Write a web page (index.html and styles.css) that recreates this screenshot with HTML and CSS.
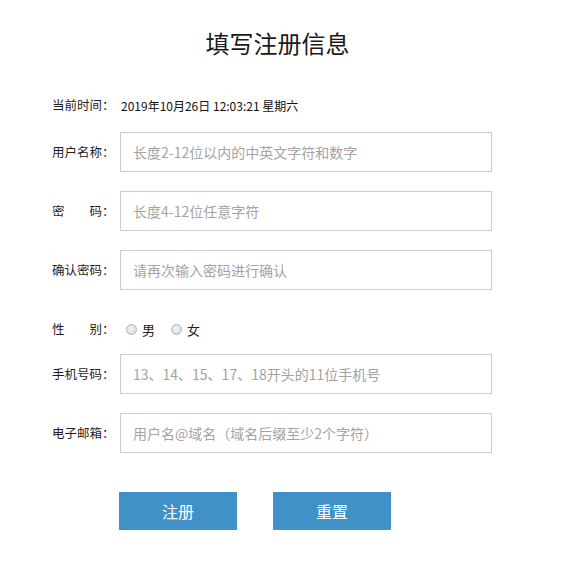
FILE: index.html
```html
<!DOCTYPE html>
<html lang="zh">
<head>
<meta charset="utf-8">
<title>填写注册信息</title>
<link rel="stylesheet" href="styles.css">
</head>
<body>
<div class="page">
  <h1 class="title">填写注册信息</h1>
  <form class="form">
    <div class="row row-time">
      <span class="label">当前时间：</span>
      <span class="time">2019年10月26日 12:03:21 星期六</span>
    </div>
    <div class="row">
      <span class="label">用户名称：</span>
      <input class="field" type="text" placeholder="长度2-12位以内的中英文字符和数字">
    </div>
    <div class="row">
      <span class="label">密　　码：</span>
      <input class="field" type="password" placeholder="长度4-12位任意字符">
    </div>
    <div class="row">
      <span class="label">确认密码：</span>
      <input class="field" type="password" placeholder="请再次输入密码进行确认">
    </div>
    <div class="row row-gender">
      <span class="label">性　　别：</span>
      <label class="radio"><input type="radio" name="sex"><span>男</span></label>
      <label class="radio"><input type="radio" name="sex"><span>女</span></label>
    </div>
    <div class="row">
      <span class="label">手机号码：</span>
      <input class="field" type="text" placeholder="13、14、15、17、18开头的11位手机号">
    </div>
    <div class="row row-last">
      <span class="label">电子邮箱：</span>
      <input class="field" type="text" placeholder="用户名@域名（域名后缀至少2个字符）">
    </div>
    <div class="buttons">
      <button type="button" class="btn">注册</button>
      <button type="button" class="btn">重置</button>
    </div>
  </form>
</div>
</body>
</html>
```
FILE: styles.css
```css
* { box-sizing: border-box; }
html, body { margin: 0; padding: 0; background: #fff; }
body {
  font-family: "Noto Sans CJK SC", "Noto Sans", "Liberation Sans", sans-serif;
  color: #222;
}
.page { width: 567px; }
.title {
  margin: 0;
  padding-top: 27px;
  padding-right: 12px;
  height: 59px;
  font-size: 24px;
  line-height: 32px;
  font-weight: normal;
  text-align: center;
  color: #1a1a1a;
}
.form {
  padding-left: 52px;
  padding-top: 26px;
}
.row {
  display: flex;
  align-items: center;
  height: 40px;
  margin-bottom: 19px;
}
.row-time { margin-bottom: 7px; }
.row-gender { margin-bottom: 5px; }
.row-last { margin-bottom: 0; }
.label {
  width: 68px;
  flex: none;
  font-size: 12.5px;
  color: #1e1e1e;
  line-height: 16px;
}
.time {
  font-size: 12px;
  color: #111;
  padding-left: 1px;
}
.field {
  width: 372px;
  height: 40px;
  border: 1px solid #ccc;
  padding: 0 12px;
  font-family: inherit;
  font-size: 14px;
  color: #333;
  outline: none;
  background: #fff;
}
.field::placeholder { color: #a3a3a3; }
.radio {
  display: flex;
  align-items: center;
  font-size: 13px;
  color: #222;
  margin-left: 6px;
  margin-right: 12px;
}
.radio + .radio { margin-left: 4px; }
.radio input {
  appearance: none;
  -webkit-appearance: none;
  margin: 0 5px 0 0;
  width: 11px;
  height: 11px;
  border-radius: 50%;
  border: 1px solid #b4b4b4;
  background: radial-gradient(circle at 50% 40%, #f2f2f2 0%, #d6d6d6 100%);
}
.buttons {
  display: flex;
  gap: 36px;
  margin-top: 39px;
  padding-left: 67px;
}
.btn {
  width: 118px;
  height: 38px;
  border: none;
  background: #4191c9;
  color: #fff;
  font-family: inherit;
  font-size: 16px;
  cursor: pointer;
}
```
